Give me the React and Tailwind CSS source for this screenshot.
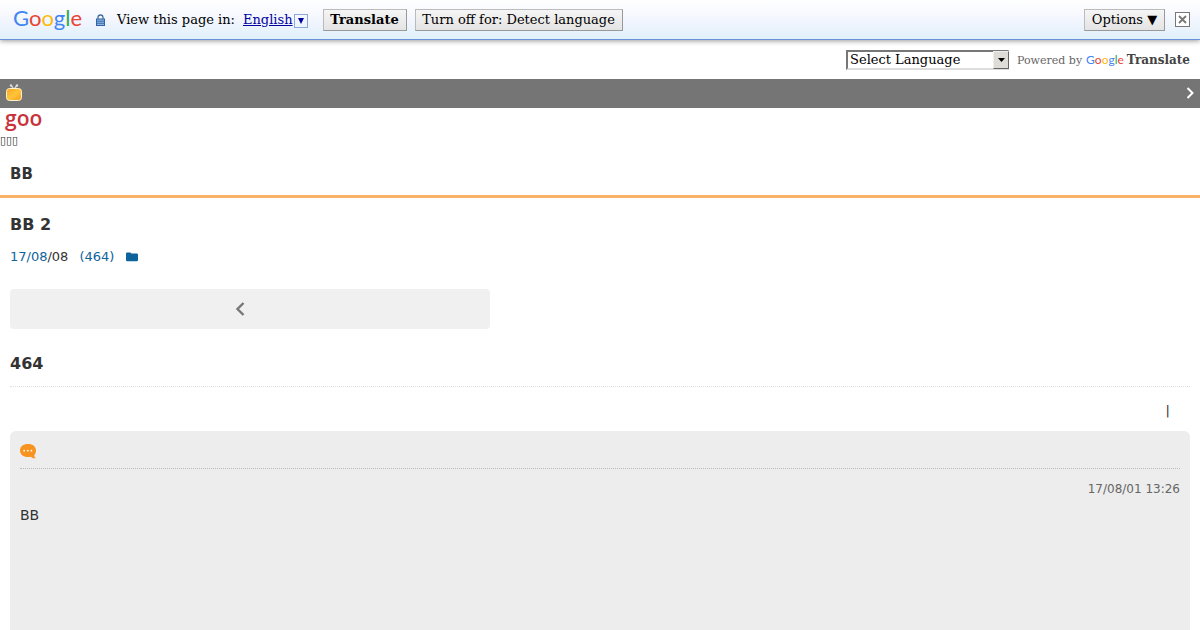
import { useState } from "react";

const GoogleLogo = ({ className }) => (
  <span role="img" aria-label="Google" className={`font-['Lato'] ${className}`}>
    <span className="text-[#4285f4]">G</span>
    <span className="text-[#ea4335]">o</span>
    <span className="text-[#fbbc05]">o</span>
    <span className="text-[#4285f4]">g</span>
    <span className="text-[#34a853]">l</span>
    <span className="text-[#ea4335]">e</span>
  </span>
);

const LockIcon = () => (
  <svg width="9" height="12" viewBox="0 0 9 12" aria-hidden="true">
    <path d="M2 6V3.500a2.500 2.500 0 0 1 5 0V6" fill="none" stroke="#4a6f9c" strokeWidth="1.300" />
    <rect x="0.500" y="5" width="8" height="6.500" fill="#8db4e2" stroke="#2f64a5" />
    <path d="M1 7.200h7M1 9.300h7" stroke="#2f64a5" strokeWidth="0.900" />
  </svg>
);

const TvIcon = () => (
  <svg width="18" height="18" viewBox="0 0 18 18" aria-hidden="true">
    <defs>
      <linearGradient id="tv" x1="0" y1="0" x2="1" y2="1">
        <stop offset="0" stopColor="#fba31c" />
        <stop offset="0.5" stopColor="#ffc53a" />
        <stop offset="1" stopColor="#f99d1c" />
      </linearGradient>
    </defs>
    <path d="M6 1.500l2.200 2.500M12 1.500L9.800 4" stroke="#ddd" strokeWidth="1.200" />
    <circle cx="6" cy="1.500" r="1.200" fill="#ddd" />
    <circle cx="12" cy="1.500" r="1.200" fill="#ddd" />
    <rect x="1.500" y="4.500" width="15" height="12" rx="3" fill="url(#tv)" stroke="#fff2cf" strokeWidth="1" />
  </svg>
);

const FolderIcon = () => (
  <svg width="12" height="10" viewBox="0 0 12 10" aria-hidden="true">
    <path d="M0 1.500Q0 .5 1 .5h3q1 0 1.300 1h5.500Q12 1.500 12 2.700v5.300q0 1.200-1.200 1.200H1.200Q0 9.200 0 8z" fill="#0f639c" />
  </svg>
);

const CommentIcon = () => (
  <svg width="16" height="15" viewBox="0 0 16 15" aria-hidden="true">
    <path
      d="M8 0C3.200 0 0 2.700 0 6.500S3.200 13 8 13c1 0 2-.1 2.800-.3 1.200 1.300 2.900 1.900 5.200 1.500-1.200-.6-1.700-1.500-1.700-2.900C15.400 10 16 8.400 16 6.500 16 2.700 12.800 0 8 0z"
      fill="#f7931e"
    />
    <circle cx="4.200" cy="6.700" r="0.900" fill="#fff" />
    <circle cx="7.800" cy="6.700" r="0.900" fill="#fff" />
    <circle cx="11.400" cy="6.700" r="0.900" fill="#fff" />
  </svg>
);

const Chevron = ({ left }) => (
  <svg width="10" height="14" viewBox="0 0 10 14" aria-hidden="true">
    <path
      d={left ? "M8.500 1L2.500 7l6 6" : "M2.500 2l5 5-5 5"}
      fill="none"
      stroke="currentColor"
      strokeWidth={left ? 2.4 : 2}
    />
  </svg>
);

const buttonClass =
  "h-[22px] border border-[#bbb] border-r-[#999] border-b-[#999] bg-linear-to-b from-[#f5f5f5] to-[#e4e4e4] leading-none whitespace-nowrap";

function TranslateBar() {
  return (
    <div className="h-10 flex items-center pl-[13px] pr-2.5 border-b border-[#6b90da] bg-linear-to-b from-white via-[#f3f6fe] to-[#e0f0fa] shadow-[0_1px_5px_#999] font-['DejaVu_Serif',serif] text-[13px] text-black">
      <GoogleLogo className="w-[83px] text-[22px] leading-6 pb-1" />
      <LockIcon />
      <span className="ml-3">View this page in:</span>
      <a href="#english" className="ml-2 flex items-center text-[#0000a0]">
        <span className="underline">English</span>
        <span className="ml-px mt-0.5 w-[14px] h-[14px] flex items-center justify-center border border-[#8aa8d8]">
          <svg width="6" height="6" viewBox="0 0 6 6" aria-hidden="true">
            <path d="M0 0h6L3 6z" fill="#0000a0" />
          </svg>
        </span>
      </a>
      <button type="button" className={`${buttonClass} ml-[15px] w-[84px] font-bold`}>Translate</button>
      <button type="button" className={`${buttonClass} ml-2 w-[208px]`}>Turn off for: Detect language</button>
      <button type="button" className={`${buttonClass} ml-auto w-[81px]`}>Options ▼</button>
      <button
        type="button"
        aria-label="Close"
        className="ml-2.5 w-[15px] h-[15px] flex items-center justify-center border border-[#777] bg-white"
      >
        <svg width="9" height="9" viewBox="0 0 9 9" aria-hidden="true">
          <path d="M1 1l7 7M8 1L1 8" stroke="#777" strokeWidth="1.800" />
        </svg>
      </button>
    </div>
  );
}

function LanguagePicker() {
  const [language, setLanguage] = useState("");

  return (
    <div className="h-[39px] flex items-center justify-end pr-2.5 font-['DejaVu_Serif',serif] text-[11px] leading-5 text-[#666]">
      <div className="grid items-center mr-2">
        <select
          aria-label="Select Language"
          value={language}
          onChange={(e) => setLanguage(e.target.value)}
          className="col-start-1 row-start-1 w-[163px] h-5 pl-0.5 appearance-none border-2 border-[#777] border-r-[#ddd] border-b-[#ddd] bg-white text-[13px] leading-4 text-black"
        >
          <option value="">Select Language</option>
          <option value="en">English</option>
        </select>
        <span className="col-start-1 row-start-1 justify-self-end w-4 h-[18px] flex items-center justify-center border border-[#eee] border-r-[#666] border-b-[#666] bg-[#dfdcd8] pointer-events-none">
          <svg width="7" height="4" viewBox="0 0 7 4" aria-hidden="true">
            <path d="M0 0h7L3.500 4z" fill="#000" />
          </svg>
        </span>
      </div>
      <span className="pt-0.5">Powered by</span>
      <GoogleLogo className="ml-1 mr-[3px] text-[12px] leading-5" />
      <span className="text-[12px] font-bold text-[#444]">Translate</span>
    </div>
  );
}

export default function App() {
  return (
    <div className="bg-white font-['DejaVu_Sans',sans-serif] text-[13px] text-[#333]">
      <TranslateBar />
      <LanguagePicker />

      <nav className="h-[29px] flex items-center justify-between px-[5px] pb-px bg-[#757575] text-white">
        <a href="#tv" aria-label="TV"><TvIcon /></a>
        <a href="#next" aria-label="Next"><Chevron /></a>
      </nav>

      <a href="#goo" className="block h-6 pl-[5px] font-['Open_Sans'] text-[21px] leading-5 font-semibold text-[#c8323a]">
        goo
      </a>
      <p className="h-[18px] text-[11px] leading-[18px]">▯▯▯</p>

      <header className="h-12 px-2.5 pt-1 flex items-center border-b-3 border-[#f9b268]">
        <h1 className="text-[15px] font-bold">BB</h1>
      </header>

      <main className="px-2.5">
        <h2 className="pt-[17px] text-[16px] leading-5 font-bold">BB 2</h2>
        <div className="mt-3 flex items-center leading-5">
          <a href="#date" className="text-[#0f639c]">17/08</a>
          <span>/08</span>
          <a href="#comments" className="ml-[11px] text-[#0f639c]">(464)</a>
          <a href="#folder" aria-label="Folder" className="ml-3"><FolderIcon /></a>
        </div>

        <a
          href="#prev"
          aria-label="Previous"
          className="mt-[22px] w-[480px] max-w-full h-10 flex items-center justify-center pr-5 rounded bg-[#f0f0f0] text-[#777]"
        >
          <Chevron left />
        </a>

        <h2 className="pt-[25px] pb-3 text-[16px] leading-5 font-bold border-b border-dotted border-[#ddd]">464</h2>
        <p className="mt-3.5 pr-5 text-right leading-5">|</p>

        <section className="mt-2.5 px-2.5 pb-[105px] rounded-t-md bg-[#ededed]">
          <div className="h-[38px] pt-[13px] border-b border-dotted border-[#bbb]">
            <CommentIcon />
          </div>
          <p className="mt-2.5 text-right text-[12px] leading-5 text-[#666]">17/08/01 13:26</p>
          <p className="mt-1.5 text-[14px] leading-5">BB</p>
        </section>
      </main>
    </div>
  );
}
